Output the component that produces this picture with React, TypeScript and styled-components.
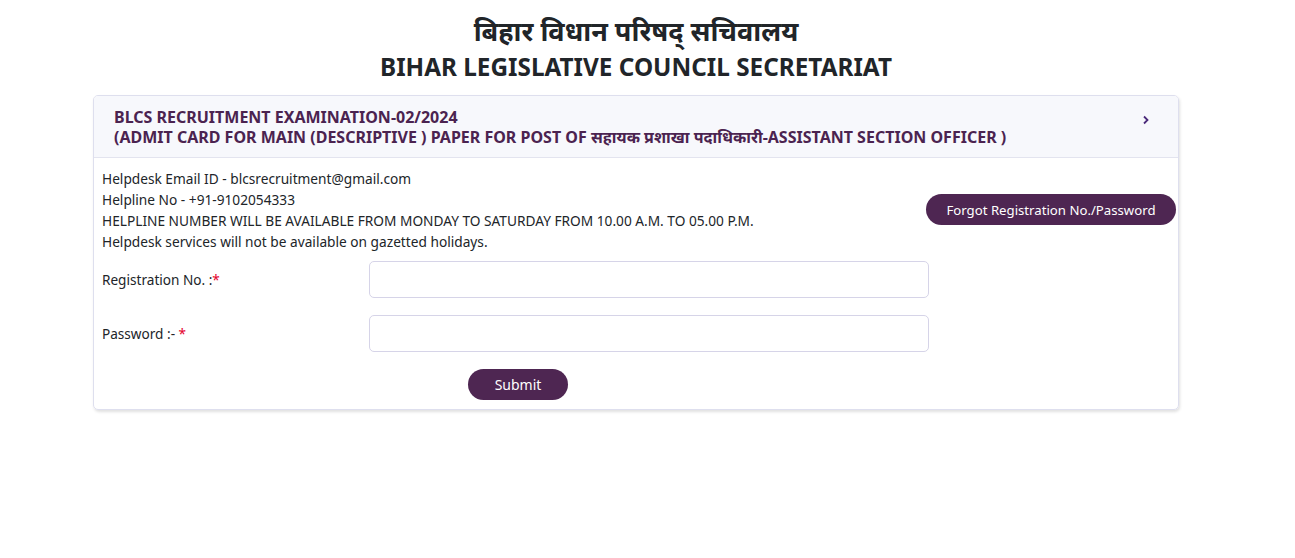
import React from 'react';
import styled, { createGlobalStyle } from 'styled-components';

const GlobalStyle = createGlobalStyle`
  html, body {
    margin: 0;
    padding: 0;
    background: #fff;
  }
  body {
    font-family: "Segoe UI", "Noto Sans", "Open Sans", sans-serif;
    color: #212529;
  }
  * {
    box-sizing: border-box;
  }
`;

const Page = styled.div`
  width: 1272px;
  min-height: 558px;
  padding-top: 12px;
`;

const Heading = styled.header`
  text-align: center;
  color: #212529;
`;

const HindiTitle = styled.h1`
  margin: 0;
  font-size: 27px;
  line-height: 38px;
  font-weight: 700;
`;

const EnglishTitle = styled.h2`
  margin: 0;
  font-size: 24.3px;
  line-height: 34px;
  font-weight: 700;
`;

const Card = styled.section`
  margin: 11px auto 0;
  width: 1086px;
  border: 1px solid #dedfee;
  border-radius: 5px;
  box-shadow: 1px 2px 3px rgba(0, 0, 0, 0.12);
  overflow: hidden;
`;

const CardHeader = styled.div`
  display: flex;
  align-items: flex-start;
  justify-content: space-between;
  background: #f7f8fc;
  border-bottom: 1px solid #e3e4ef;
  padding: 11px 28px 10px 20px;
  color: #4b2350;
  font-size: 16px;
  font-weight: 700;
  line-height: 20px;
`;

const Chevron = styled.svg`
  margin-top: 8px;
  flex-shrink: 0;
`;

const CardBody = styled.div`
  display: grid;
  grid-template-columns: minmax(0, 1fr) auto;
  padding: 10px 2px 9px 8px;
`;

const Info = styled.div`
  font-size: 13.7px;
  line-height: 21px;
  margin-bottom: 9px;
`;

const Side = styled.div`
  padding-top: 26px;
`;

const PillButton = styled.button<{ $width: number; $size: number }>`
  width: ${(p) => p.$width}px;
  height: 31px;
  border: none;
  border-radius: 16px;
  background: #4e2652;
  color: #fff;
  font-family: inherit;
  font-size: ${(p) => p.$size}px;
  cursor: pointer;
`;

const FormRow = styled.div`
  display: grid;
  grid-template-columns: 267px 560px;
  align-items: center;
  margin-bottom: 17px;
`;

const Label = styled.label`
  font-size: 13.6px;
`;

const Required = styled.span`
  color: #e4002b;
`;

const Input = styled.input`
  height: 37px;
  width: 100%;
  border: 1px solid #d6d4e8;
  border-radius: 5px;
  padding: 6px 12px;
  font-size: 14px;
  font-family: inherit;
  outline: none;
`;

const Actions = styled.div`
  padding-left: 366px;
`;

export default function App() {
  return (
    <Page>
      <GlobalStyle />
      <Heading>
        <HindiTitle>बिहार विधान परिषद् सचिवालय</HindiTitle>
        <EnglishTitle>BIHAR LEGISLATIVE COUNCIL SECRETARIAT</EnglishTitle>
      </Heading>
      <Card>
        <CardHeader>
          <div>
            BLCS RECRUITMENT EXAMINATION-02/2024
            <br />
            (ADMIT CARD FOR MAIN (DESCRIPTIVE ) PAPER FOR POST OF सहायक प्रशाखा पदाधिकारी-ASSISTANT SECTION OFFICER )
          </div>
          <Chevron width="8" height="10" viewBox="0 0 8 10">
            <path d="M2 1.5 L5.5 5 L2 8.5" fill="none" stroke="#4b2a7a" strokeWidth="1.8" />
          </Chevron>
        </CardHeader>
        <CardBody>
          <div>
            <Info>
              Helpdesk Email ID - blcsrecruitment@gmail.com
              <br />
              Helpline No - +91-9102054333
              <br />
              HELPLINE NUMBER WILL BE AVAILABLE FROM MONDAY TO SATURDAY FROM 10.00 A.M. TO 05.00 P.M.
              <br />
              Helpdesk services will not be available on gazetted holidays.
            </Info>
            <FormRow>
              <Label htmlFor="reg">
                Registration No. :<Required>*</Required>
              </Label>
              <Input id="reg" type="text" />
            </FormRow>
            <FormRow>
              <Label htmlFor="pwd">
                Password :- <Required>*</Required>
              </Label>
              <Input id="pwd" type="password" />
            </FormRow>
            <Actions>
              <PillButton $width={100} $size={14}>Submit</PillButton>
            </Actions>
          </div>
          <Side>
            <PillButton $width={250} $size={13.2}>Forgot Registration No./Password</PillButton>
          </Side>
        </CardBody>
      </Card>
    </Page>
  );
}
